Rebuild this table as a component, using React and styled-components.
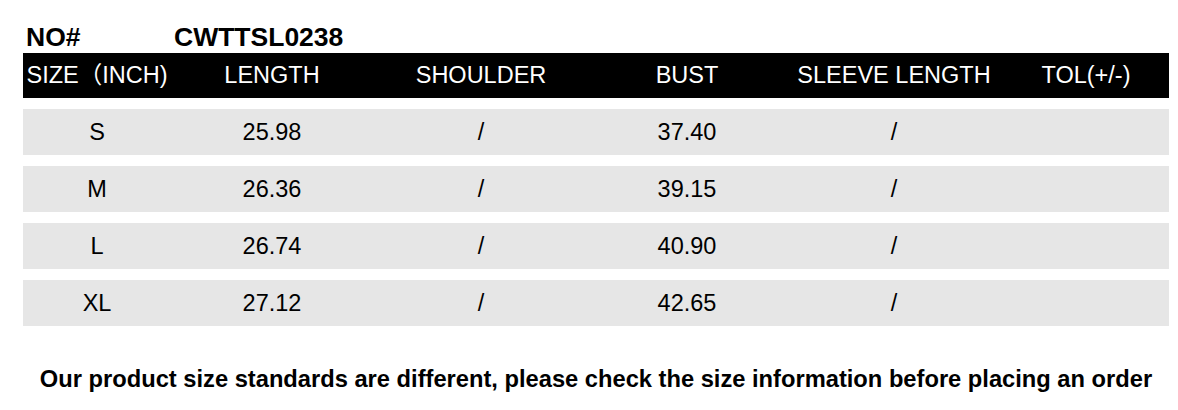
import React from 'react';
import styled, { createGlobalStyle } from 'styled-components';

const GlobalStyle = createGlobalStyle`
  body {
    margin: 0;
    background: #fff;
    font-family: "Liberation Sans", Arial, "Noto Sans CJK SC", sans-serif;
    color: #000;
  }
`

const Page = styled.div`
  width: 1146px;
  padding: 22px 0 0 23px;
`

const TitleRow = styled.div`
  display: flex;
  padding-left: 3px;
  margin-bottom: 1px;
  font-size: 26.5px;
  font-weight: bold;
  line-height: 30px;
`

const TitleLabel = styled.div`
  width: 148px;
`

const Grid = styled.div`
  display: grid;
  grid-template-columns: 148px 202px 216px 196px 218px 1fr;
  height: ${props => props.head ? '45px' : '46px'};
  margin-bottom: 11px;
  background-color: ${props => props.head ? '#000' : '#e6e6e6'};
  color: ${props => props.head ? '#fff' : '#000'};
  font-size: 23.5px;
  line-height: 27px;
`

const Cell = styled.div`
  display: flex;
  align-items: center;
  justify-content: center;
  white-space: nowrap;
`

const Note = styled.div`
  margin-top: 40px;
  text-align: center;
  font-size: 23.7px;
  font-weight: bold;
  line-height: 26px;
  white-space: nowrap;
`

const headers = ['SIZE（INCH)', 'LENGTH', 'SHOULDER', 'BUST', 'SLEEVE LENGTH', 'TOL(+/-)']

const sizes = [
  ['S', '25.98', '/', '37.40', '/', ''],
  ['M', '26.36', '/', '39.15', '/', ''],
  ['L', '26.74', '/', '40.90', '/', ''],
  ['XL', '27.12', '/', '42.65', '/', ''],
]

export default function App() {
  return (
    <Page>
      <GlobalStyle />
      <TitleRow>
        <TitleLabel>NO#</TitleLabel>
        <div>CWTTSL0238</div>
      </TitleRow>
      <Grid head>
        {headers.map(h => <Cell key={h}>{h}</Cell>)}
      </Grid>
      {sizes.map(row => (
        <Grid key={row[0]}>
          {row.map((v, i) => <Cell key={i}>{v}</Cell>)}
        </Grid>
      ))}
      <Note>Our product size standards are different, please check the size information before placing an order</Note>
    </Page>
  )
}
